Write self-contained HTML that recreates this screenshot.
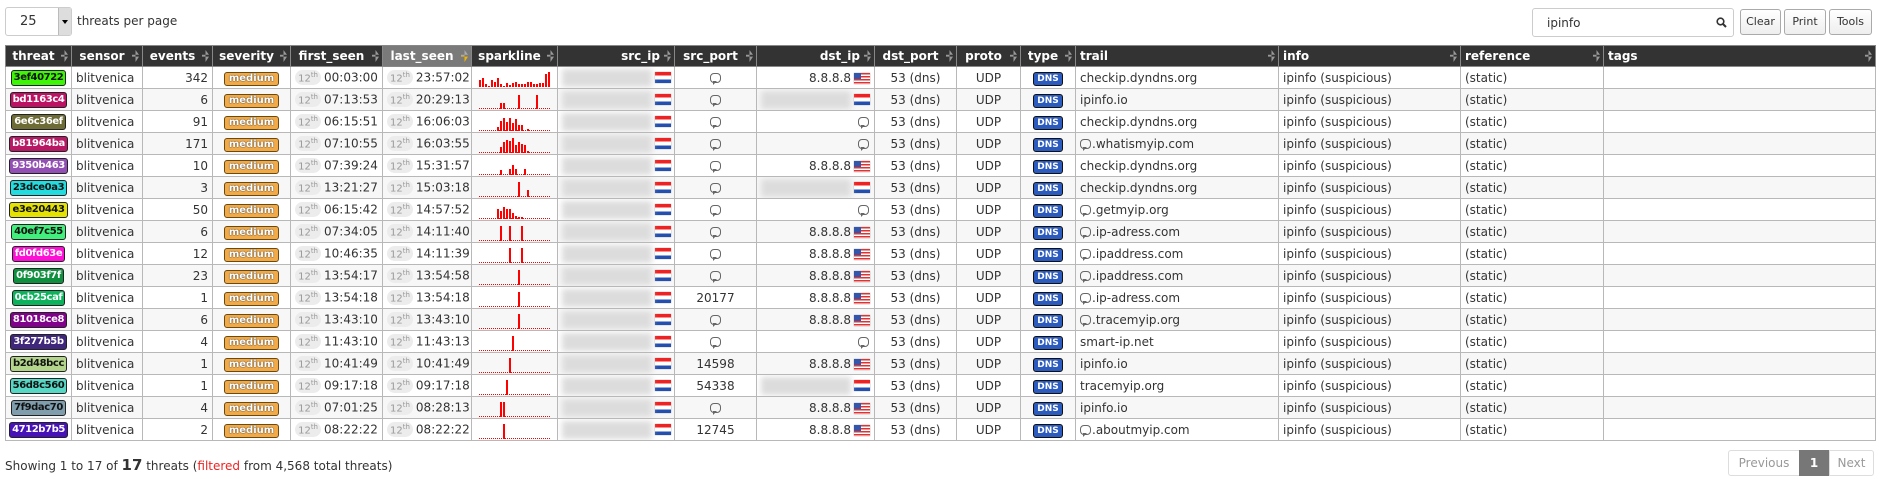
<!DOCTYPE html>
<html><head><meta charset="utf-8">
<style>
*{box-sizing:border-box}
body{margin:0;width:1880px;height:479px;background:#fff;font-family:"DejaVu Sans",Verdana,sans-serif;font-size:12px;color:#333;position:relative;overflow:hidden}
.sel{position:absolute;left:5px;top:7px;width:67px;height:29px;border:1px solid #ccc;border-radius:3px;background:#fff}
.sel span{position:absolute;left:14px;top:6px;font-size:13px}
.sel i{position:absolute;right:0;top:0;width:13px;height:27px;background:#ddd;border-left:1px solid #bbb}
.sel i:after{content:"";position:absolute;left:3px;top:12px;border:3px solid transparent;border-top:4px solid #000}
.tpp{position:absolute;left:77px;top:14px;font-size:12px}
.search{position:absolute;left:1532px;top:8px;width:202px;height:29px;border:1px solid #ccc;border-radius:3px;background:#fff}
.search span{position:absolute;left:14px;top:7px;font-size:12px}
.btn{position:absolute;top:9px;height:26px;border:1px solid #aaa;border-radius:3px;background:linear-gradient(#fff,#eee);font-size:11px;text-align:center;line-height:24px}
table{position:absolute;left:5px;top:45px;border-collapse:collapse;table-layout:fixed;width:1870px}
th{background:#333;color:#fff;font-weight:bold;height:21px;padding:0 14px 0 4px;border:1px solid #888;position:relative;font-size:12px;white-space:nowrap}
th:after{content:"";position:absolute;right:3px;top:4px;width:7px;height:12px;background:linear-gradient(#999,#999);clip-path:polygon(50% 0,100% 40%,0 40%,0 55%,100% 55%,50% 100%)}
th.cur{background:#7a7a7a}
th.cur:after{background:linear-gradient(#aaa 0 45%,#f0b400 55%)}
td{height:22px;border:1px solid #b8b8b8;padding:0 4px;white-space:nowrap;overflow:hidden}
td:first-child{padding:0 2px}
tr:nth-child(odd) td{background:#f7f7f7}
tr:nth-child(even) td{background:#fff}
.c{text-align:center}.r{text-align:right}
.tb{display:inline-block;border:1px solid #222;border-radius:3px;font-size:10px;font-weight:bold;padding:1px 2px;line-height:12px;font-family:"DejaVu Sans",sans-serif;letter-spacing:-.4px}
.w{color:#fff}.k{color:#111}
.med{display:inline-block;background:#f2aa48;border:1px solid #6b4a10;border-radius:3px;color:#fff;font-size:10px;font-weight:bold;padding:0 4px;line-height:12px;text-shadow:0 0 1px #333,0 0 1px #333}
.dt{display:inline-block;background:#ececec;border-radius:8px;color:#999;font-size:10px;padding:1px 3px;margin-right:3px}
.dt sup{font-size:7px}
.ip{display:inline-block;width:90px;height:18px;background:#dcdcdc;filter:blur(3px);vertical-align:middle}
.hr,.us{display:inline-block;width:16px;height:11px;vertical-align:middle;margin-left:3px;box-shadow:0 0 1px #888}
.hr{background:linear-gradient(#e22 0 33%,#fff 33% 66%,#2350b0 66%)}
.us{background:linear-gradient(90deg,#3355aa 0 45%,transparent 45%) 0 0/100% 55% no-repeat,repeating-linear-gradient(#d33 0 1.5px,#fff 1.5px 3px)}
.b{display:inline-block;width:11px;height:10px;border:1px solid #666;border-radius:4px;vertical-align:middle;position:relative;margin-right:1px}
.b:after{content:"";position:absolute;left:2px;bottom:-3px;border:2px solid transparent;border-top:2px solid #666;border-left:2px solid #666}
.dns{display:inline-block;background:#2c5bbf;border:1px solid #111;border-radius:3px;color:#fff;font-size:9px;font-weight:bold;padding:0 3px;line-height:12px}
svg{display:block;margin:0 auto}
.foot{position:absolute;left:5px;top:456px;font-size:12px}
.foot b{font-size:15px}
.pg{position:absolute;top:450px;height:26px;font-size:12px;line-height:24px;text-align:center;border:1px solid #ddd;color:#999;background:#fff}
</style></head><body>
<div class="sel"><span>25</span><i></i></div>
<div class="tpp">threats per page</div>
<div class="search"><span>ipinfo</span><svg style="position:absolute;right:6px;top:8px" width="11" height="11" viewBox="0 0 11 11"><circle cx="4.5" cy="4.5" r="3.3" fill="none" stroke="#333" stroke-width="1.6"/><path d="M7 7l3 3" stroke="#333" stroke-width="2"/></svg></div>
<div class="btn" style="left:1740px;width:41px">Clear</div>
<div class="btn" style="left:1784px;width:42px">Print</div>
<div class="btn" style="left:1829px;width:43px">Tools</div>
<table>
<colgroup><col style="width:66px"><col style="width:71px"><col style="width:70px"><col style="width:78px"><col style="width:92px"><col style="width:89px"><col style="width:86px"><col style="width:117px"><col style="width:82px"><col style="width:118px"><col style="width:82px"><col style="width:64px"><col style="width:55px"><col style="width:203px"><col style="width:182px"><col style="width:143px"><col style="width:272px"></colgroup>
<tr><th class="c">threat</th><th class="c">sensor</th><th class="c">events</th><th class="c">severity</th><th class="c">first_seen</th><th class="c cur">last_seen</th><th class="c">sparkline</th><th class="r">src_ip</th><th class="c">src_port</th><th class="r">dst_ip</th><th class="c">dst_port</th><th class="c">proto</th><th class="c">type</th><th style="text-align:left">trail</th><th style="text-align:left">info</th><th style="text-align:left">reference</th><th style="text-align:left">tags</th></tr>
<tr><td class="c"><span class="tb k" style="background:#3ef407">3ef40722</span></td><td>blitvenica</td><td class="r">342</td><td class="c"><span class="med">medium</span></td><td class="c"><span class="dt">12<sup>th</sup></span>00:03:00</td><td class="c"><span class="dt">12<sup>th</sup></span>23:57:02</td><td><svg width="72" height="18"><path d="M1 18v-7M4 18v-9M7 18v-3M10 18v-1M13 18v-7M16 18v-5M19 18v-9M22 18v-3M25 18v-1M28 18v-4M31 18v-2M34 18v-4M37 18v-5M40 18v-3M43 18v-3M46 18v-3M49 18v-5M52 18v-5M55 18v-3M58 18v-3M61 18v-4M64 18v-4M67 18v-13M70 18v-15" stroke="red" stroke-width="2"/></svg></td><td class="r"><span class="ip"></span><span class="hr"></span></td><td class="c"><span class="b"></span></td><td class="r">8.8.8.8<span class="us"></span></td><td class="c">53 (dns)</td><td class="c">UDP</td><td class="c"><span class="dns">DNS</span></td><td>checkip.dyndns.org</td><td>ipinfo (suspicious)</td><td>(static)</td><td></td></tr>
<tr><td class="c"><span class="tb w" style="background:#bd1163">bd1163c4</span></td><td>blitvenica</td><td class="r">6</td><td class="c"><span class="med">medium</span></td><td class="c"><span class="dt">12<sup>th</sup></span>07:13:53</td><td class="c"><span class="dt">12<sup>th</sup></span>20:29:13</td><td><svg width="72" height="18"><path d="M0 17.5h72" stroke="red" stroke-dasharray="1 1"/><path d="M22 18v-6M25 18v-6M40 18v-14M58 18v-14" stroke="red" stroke-width="2"/></svg></td><td class="r"><span class="ip"></span><span class="hr"></span></td><td class="c"><span class="b"></span></td><td class="r"><span class="ip"></span><span class="hr"></span></td><td class="c">53 (dns)</td><td class="c">UDP</td><td class="c"><span class="dns">DNS</span></td><td>ipinfo.io</td><td>ipinfo (suspicious)</td><td>(static)</td><td></td></tr>
<tr><td class="c"><span class="tb w" style="background:#6e6c36">6e6c36ef</span></td><td>blitvenica</td><td class="r">91</td><td class="c"><span class="med">medium</span></td><td class="c"><span class="dt">12<sup>th</sup></span>06:15:51</td><td class="c"><span class="dt">12<sup>th</sup></span>16:06:03</td><td><svg width="72" height="18"><path d="M0 17.5h72" stroke="red" stroke-dasharray="1 1"/><path d="M19 18v-4M22 18v-10M25 18v-13M28 18v-9M31 18v-13M34 18v-8M37 18v-12M40 18v-6M43 18v-6M49 18v-2" stroke="red" stroke-width="2"/></svg></td><td class="r"><span class="ip"></span><span class="hr"></span></td><td class="c"><span class="b"></span></td><td class="r"><span class="b"></span></td><td class="c">53 (dns)</td><td class="c">UDP</td><td class="c"><span class="dns">DNS</span></td><td>checkip.dyndns.org</td><td>ipinfo (suspicious)</td><td>(static)</td><td></td></tr>
<tr><td class="c"><span class="tb w" style="background:#b81964">b81964ba</span></td><td>blitvenica</td><td class="r">171</td><td class="c"><span class="med">medium</span></td><td class="c"><span class="dt">12<sup>th</sup></span>07:10:55</td><td class="c"><span class="dt">12<sup>th</sup></span>16:03:55</td><td><svg width="72" height="18"><path d="M0 17.5h72" stroke="red" stroke-dasharray="1 1"/><path d="M22 18v-6M25 18v-11M28 18v-13M31 18v-12M34 18v-15M37 18v-8M40 18v-11M43 18v-9M46 18v-8M49 18v-2" stroke="red" stroke-width="2"/></svg></td><td class="r"><span class="ip"></span><span class="hr"></span></td><td class="c"><span class="b"></span></td><td class="r"><span class="b"></span></td><td class="c">53 (dns)</td><td class="c">UDP</td><td class="c"><span class="dns">DNS</span></td><td><span class="b"></span>.whatismyip.com</td><td>ipinfo (suspicious)</td><td>(static)</td><td></td></tr>
<tr><td class="c"><span class="tb w" style="background:#9350b4">9350b463</span></td><td>blitvenica</td><td class="r">10</td><td class="c"><span class="med">medium</span></td><td class="c"><span class="dt">12<sup>th</sup></span>07:39:24</td><td class="c"><span class="dt">12<sup>th</sup></span>15:31:57</td><td><svg width="72" height="18"><path d="M0 17.5h72" stroke="red" stroke-dasharray="1 1"/><path d="M22 18v-5M31 18v-6M34 18v-10M37 18v-6M46 18v-6" stroke="red" stroke-width="2"/></svg></td><td class="r"><span class="ip"></span><span class="hr"></span></td><td class="c"><span class="b"></span></td><td class="r">8.8.8.8<span class="us"></span></td><td class="c">53 (dns)</td><td class="c">UDP</td><td class="c"><span class="dns">DNS</span></td><td>checkip.dyndns.org</td><td>ipinfo (suspicious)</td><td>(static)</td><td></td></tr>
<tr><td class="c"><span class="tb k" style="background:#23dce0">23dce0a3</span></td><td>blitvenica</td><td class="r">3</td><td class="c"><span class="med">medium</span></td><td class="c"><span class="dt">12<sup>th</sup></span>13:21:27</td><td class="c"><span class="dt">12<sup>th</sup></span>15:03:18</td><td><svg width="72" height="18"><path d="M0 17.5h72" stroke="red" stroke-dasharray="1 1"/><path d="M40 18v-15M49 18v-7" stroke="red" stroke-width="2"/></svg></td><td class="r"><span class="ip"></span><span class="hr"></span></td><td class="c"><span class="b"></span></td><td class="r"><span class="ip"></span><span class="hr"></span></td><td class="c">53 (dns)</td><td class="c">UDP</td><td class="c"><span class="dns">DNS</span></td><td>checkip.dyndns.org</td><td>ipinfo (suspicious)</td><td>(static)</td><td></td></tr>
<tr><td class="c"><span class="tb k" style="background:#e3e204">e3e20443</span></td><td>blitvenica</td><td class="r">50</td><td class="c"><span class="med">medium</span></td><td class="c"><span class="dt">12<sup>th</sup></span>06:15:42</td><td class="c"><span class="dt">12<sup>th</sup></span>14:57:52</td><td><svg width="72" height="18"><path d="M0 17.5h72" stroke="red" stroke-dasharray="1 1"/><path d="M19 18v-10M22 18v-8M25 18v-12M28 18v-10M31 18v-10M34 18v-6M37 18v-3M40 18v-2M43 18v-2" stroke="red" stroke-width="2"/></svg></td><td class="r"><span class="ip"></span><span class="hr"></span></td><td class="c"><span class="b"></span></td><td class="r"><span class="b"></span></td><td class="c">53 (dns)</td><td class="c">UDP</td><td class="c"><span class="dns">DNS</span></td><td><span class="b"></span>.getmyip.org</td><td>ipinfo (suspicious)</td><td>(static)</td><td></td></tr>
<tr><td class="c"><span class="tb k" style="background:#40ef7c">40ef7c55</span></td><td>blitvenica</td><td class="r">6</td><td class="c"><span class="med">medium</span></td><td class="c"><span class="dt">12<sup>th</sup></span>07:34:05</td><td class="c"><span class="dt">12<sup>th</sup></span>14:11:40</td><td><svg width="72" height="18"><path d="M0 17.5h72" stroke="red" stroke-dasharray="1 1"/><path d="M22 18v-15M31 18v-15M43 18v-15" stroke="red" stroke-width="2"/></svg></td><td class="r"><span class="ip"></span><span class="hr"></span></td><td class="c"><span class="b"></span></td><td class="r">8.8.8.8<span class="us"></span></td><td class="c">53 (dns)</td><td class="c">UDP</td><td class="c"><span class="dns">DNS</span></td><td><span class="b"></span>.ip-adress.com</td><td>ipinfo (suspicious)</td><td>(static)</td><td></td></tr>
<tr><td class="c"><span class="tb w" style="background:#fd0fd6">fd0fd63e</span></td><td>blitvenica</td><td class="r">12</td><td class="c"><span class="med">medium</span></td><td class="c"><span class="dt">12<sup>th</sup></span>10:46:35</td><td class="c"><span class="dt">12<sup>th</sup></span>14:11:39</td><td><svg width="72" height="18"><path d="M0 17.5h72" stroke="red" stroke-dasharray="1 1"/><path d="M31 18v-15M43 18v-15" stroke="red" stroke-width="2"/></svg></td><td class="r"><span class="ip"></span><span class="hr"></span></td><td class="c"><span class="b"></span></td><td class="r">8.8.8.8<span class="us"></span></td><td class="c">53 (dns)</td><td class="c">UDP</td><td class="c"><span class="dns">DNS</span></td><td><span class="b"></span>.ipaddress.com</td><td>ipinfo (suspicious)</td><td>(static)</td><td></td></tr>
<tr><td class="c"><span class="tb w" style="background:#0f903f">0f903f7f</span></td><td>blitvenica</td><td class="r">23</td><td class="c"><span class="med">medium</span></td><td class="c"><span class="dt">12<sup>th</sup></span>13:54:17</td><td class="c"><span class="dt">12<sup>th</sup></span>13:54:58</td><td><svg width="72" height="18"><path d="M0 17.5h72" stroke="red" stroke-dasharray="1 1"/><path d="M40 18v-15" stroke="red" stroke-width="2"/></svg></td><td class="r"><span class="ip"></span><span class="hr"></span></td><td class="c"><span class="b"></span></td><td class="r">8.8.8.8<span class="us"></span></td><td class="c">53 (dns)</td><td class="c">UDP</td><td class="c"><span class="dns">DNS</span></td><td><span class="b"></span>.ipaddress.com</td><td>ipinfo (suspicious)</td><td>(static)</td><td></td></tr>
<tr><td class="c"><span class="tb w" style="background:#0cb25c">0cb25caf</span></td><td>blitvenica</td><td class="r">1</td><td class="c"><span class="med">medium</span></td><td class="c"><span class="dt">12<sup>th</sup></span>13:54:18</td><td class="c"><span class="dt">12<sup>th</sup></span>13:54:18</td><td><svg width="72" height="18"><path d="M0 17.5h72" stroke="red" stroke-dasharray="1 1"/><path d="M40 18v-15" stroke="red" stroke-width="2"/></svg></td><td class="r"><span class="ip"></span><span class="hr"></span></td><td class="c">20177</td><td class="r">8.8.8.8<span class="us"></span></td><td class="c">53 (dns)</td><td class="c">UDP</td><td class="c"><span class="dns">DNS</span></td><td><span class="b"></span>.ip-adress.com</td><td>ipinfo (suspicious)</td><td>(static)</td><td></td></tr>
<tr><td class="c"><span class="tb w" style="background:#81018c">81018ce8</span></td><td>blitvenica</td><td class="r">6</td><td class="c"><span class="med">medium</span></td><td class="c"><span class="dt">12<sup>th</sup></span>13:43:10</td><td class="c"><span class="dt">12<sup>th</sup></span>13:43:10</td><td><svg width="72" height="18"><path d="M0 17.5h72" stroke="red" stroke-dasharray="1 1"/><path d="M40 18v-15" stroke="red" stroke-width="2"/></svg></td><td class="r"><span class="ip"></span><span class="hr"></span></td><td class="c"><span class="b"></span></td><td class="r">8.8.8.8<span class="us"></span></td><td class="c">53 (dns)</td><td class="c">UDP</td><td class="c"><span class="dns">DNS</span></td><td><span class="b"></span>.tracemyip.org</td><td>ipinfo (suspicious)</td><td>(static)</td><td></td></tr>
<tr><td class="c"><span class="tb w" style="background:#3f277b">3f277b5b</span></td><td>blitvenica</td><td class="r">4</td><td class="c"><span class="med">medium</span></td><td class="c"><span class="dt">12<sup>th</sup></span>11:43:10</td><td class="c"><span class="dt">12<sup>th</sup></span>11:43:13</td><td><svg width="72" height="18"><path d="M0 17.5h72" stroke="red" stroke-dasharray="1 1"/><path d="M34 18v-15" stroke="red" stroke-width="2"/></svg></td><td class="r"><span class="ip"></span><span class="hr"></span></td><td class="c"><span class="b"></span></td><td class="r"><span class="b"></span></td><td class="c">53 (dns)</td><td class="c">UDP</td><td class="c"><span class="dns">DNS</span></td><td>smart-ip.net</td><td>ipinfo (suspicious)</td><td>(static)</td><td></td></tr>
<tr><td class="c"><span class="tb k" style="background:#b2d48b">b2d48bcc</span></td><td>blitvenica</td><td class="r">1</td><td class="c"><span class="med">medium</span></td><td class="c"><span class="dt">12<sup>th</sup></span>10:41:49</td><td class="c"><span class="dt">12<sup>th</sup></span>10:41:49</td><td><svg width="72" height="18"><path d="M0 17.5h72" stroke="red" stroke-dasharray="1 1"/><path d="M31 18v-15" stroke="red" stroke-width="2"/></svg></td><td class="r"><span class="ip"></span><span class="hr"></span></td><td class="c">14598</td><td class="r">8.8.8.8<span class="us"></span></td><td class="c">53 (dns)</td><td class="c">UDP</td><td class="c"><span class="dns">DNS</span></td><td>ipinfo.io</td><td>ipinfo (suspicious)</td><td>(static)</td><td></td></tr>
<tr><td class="c"><span class="tb k" style="background:#56d8c5">56d8c560</span></td><td>blitvenica</td><td class="r">1</td><td class="c"><span class="med">medium</span></td><td class="c"><span class="dt">12<sup>th</sup></span>09:17:18</td><td class="c"><span class="dt">12<sup>th</sup></span>09:17:18</td><td><svg width="72" height="18"><path d="M0 17.5h72" stroke="red" stroke-dasharray="1 1"/><path d="M28 18v-15" stroke="red" stroke-width="2"/></svg></td><td class="r"><span class="ip"></span><span class="hr"></span></td><td class="c">54338</td><td class="r"><span class="ip"></span><span class="hr"></span></td><td class="c">53 (dns)</td><td class="c">UDP</td><td class="c"><span class="dns">DNS</span></td><td>tracemyip.org</td><td>ipinfo (suspicious)</td><td>(static)</td><td></td></tr>
<tr><td class="c"><span class="tb k" style="background:#7f9dac">7f9dac70</span></td><td>blitvenica</td><td class="r">4</td><td class="c"><span class="med">medium</span></td><td class="c"><span class="dt">12<sup>th</sup></span>07:01:25</td><td class="c"><span class="dt">12<sup>th</sup></span>08:28:13</td><td><svg width="72" height="18"><path d="M0 17.5h72" stroke="red" stroke-dasharray="1 1"/><path d="M22 18v-15M25 18v-15" stroke="red" stroke-width="2"/></svg></td><td class="r"><span class="ip"></span><span class="hr"></span></td><td class="c"><span class="b"></span></td><td class="r">8.8.8.8<span class="us"></span></td><td class="c">53 (dns)</td><td class="c">UDP</td><td class="c"><span class="dns">DNS</span></td><td>ipinfo.io</td><td>ipinfo (suspicious)</td><td>(static)</td><td></td></tr>
<tr><td class="c"><span class="tb w" style="background:#4712b7">4712b7b5</span></td><td>blitvenica</td><td class="r">2</td><td class="c"><span class="med">medium</span></td><td class="c"><span class="dt">12<sup>th</sup></span>08:22:22</td><td class="c"><span class="dt">12<sup>th</sup></span>08:22:22</td><td><svg width="72" height="18"><path d="M0 17.5h72" stroke="red" stroke-dasharray="1 1"/><path d="M25 18v-15" stroke="red" stroke-width="2"/></svg></td><td class="r"><span class="ip"></span><span class="hr"></span></td><td class="c">12745</td><td class="r">8.8.8.8<span class="us"></span></td><td class="c">53 (dns)</td><td class="c">UDP</td><td class="c"><span class="dns">DNS</span></td><td><span class="b"></span>.aboutmyip.com</td><td>ipinfo (suspicious)</td><td>(static)</td><td></td></tr>
</table>
<div class="foot">Showing 1 to 17 of <b>17</b> threats (<span style="color:#e22">filtered</span> from 4,568 total threats)</div>
<div class="pg" style="left:1728px;width:72px;border-radius:3px 0 0 3px">Previous</div>
<div class="pg" style="left:1799px;width:30px;background:#777;color:#fff;font-weight:bold;border-color:#777">1</div>
<div class="pg" style="left:1829px;width:45px;border-radius:0 3px 3px 0">Next</div>
</body></html>
